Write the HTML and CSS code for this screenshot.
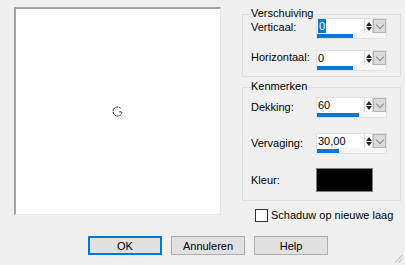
FILE: index.html
```html
<!DOCTYPE html>
<html lang="nl">

<head>
  <meta charset="UTF-8" />
  <title>Slagschaduw</title>
  <link rel="stylesheet" href="styles.css">
</head>

<body>
  <div class="dialog">
    <div class="main">
      <div class="preview">
        <svg class="cursor" width="11" height="11" viewBox="0 0 11 11">
          <path d="M8.7 2.3 A4.5 4.5 0 1 0 10 5.9 H7" fill="none" stroke="#222" stroke-width="1" stroke-dasharray="2 0.7" />
        </svg>
      </div>

      <div class="side">
        <div class="group group-offset">
          <div class="group-title">Verschuiving</div>
          <div class="row row-first">
            <span class="label pad-2">Verticaal:</span>
            <div class="field">
              <div class="field-top">
                <span class="value"><span class="selected">0</span></span>
                <span class="spin"><i class="up"></i><i class="down"></i></span>
                <span class="drop"></span>
              </div>
              <div class="track"><div class="fill" style="width: 36px"></div></div>
            </div>
          </div>
          <div class="row">
            <span class="label">Horizontaal:</span>
            <div class="field">
              <div class="field-top">
                <span class="value">0</span>
                <span class="spin"><i class="up"></i><i class="down"></i></span>
                <span class="drop"></span>
              </div>
              <div class="track"><div class="fill" style="width: 36px"></div></div>
            </div>
          </div>
        </div>

        <div class="group group-props">
          <div class="group-title">Kenmerken</div>
          <div class="row row-first">
            <span class="label pad-3">Dekking:</span>
            <div class="field">
              <div class="field-top">
                <span class="value">60</span>
                <span class="spin"><i class="up"></i><i class="down"></i></span>
                <span class="drop"></span>
              </div>
              <div class="track"><div class="fill" style="width: 42px"></div></div>
            </div>
          </div>
          <div class="row">
            <span class="label pad-3">Vervaging:</span>
            <div class="field">
              <div class="field-top">
                <span class="value">30,00</span>
                <span class="spin"><i class="up"></i><i class="down"></i></span>
                <span class="drop"></span>
              </div>
              <div class="track"><div class="fill" style="width: 22px"></div></div>
            </div>
          </div>
          <div class="row row-color">
            <span class="label">Kleur:</span>
            <div class="swatch"></div>
          </div>
        </div>

        <label class="check">
          <span class="box"></span>
          Schaduw op nieuwe laag
        </label>
      </div>
    </div>

    <div class="buttons">
      <button class="btn btn-default">OK</button>
      <button class="btn">Annuleren</button>
      <button class="btn">Help</button>
    </div>

    <svg class="grip" width="9" height="9" viewBox="0 0 9 9">
      <path d="M8.5 1 L1 8.5 M8.5 4.5 L4.5 8.5" stroke="#b0b0b0" stroke-width="1" />
    </svg>
  </div>
</body>

</html>
```

FILE: styles.css
```css
* {
  margin: 0;
  padding: 0;
  box-sizing: border-box;
}

html,
body {
  width: 405px;
  height: 265px;
  overflow: hidden;
  background: #f0f0f0;
  font-family: 'Liberation Sans', Arial, sans-serif;
  font-size: 11px;
  color: #000;
}

.dialog {
  position: relative;
  height: 265px;
  padding: 7px 0 0 14px;
}

.main {
  display: flex;
  align-items: flex-start;
}

.preview {
  width: 207px;
  height: 208px;
  background: #fff;
  border-top: 2px solid #a3a3a3;
  border-left: 2px solid #a3a3a3;
  border-right: 1px solid #e6e6e6;
  border-bottom: 1px solid #e6e6e6;
  display: flex;
  align-items: center;
  justify-content: center;
}

.cursor {
  margin: 0 2px 1px 0;
}

.side {
  margin-left: 21px;
  width: 159px;
}

.group {
  border: 1px solid #dcdcdc;
  padding: 0 0 0 8px;
}

.group-offset {
  margin-top: 7px;
  height: 63px;
}

.group-props {
  margin-top: 10px;
  height: 114px;
}

.group-title {
  display: table;
  margin-top: -8px;
  padding: 0 2px 0 0;
  line-height: 13px;
  background: #f0f0f0;
}

.row {
  display: flex;
  align-items: flex-start;
  margin-top: 11px;
}

.group-offset .row-first {
  margin-top: -2px;
}

.group-props .row {
  margin-top: 15px;
}

.group-props .row-first {
  margin-top: 4px;
}

.group-props .row-color {
  margin-top: 14px;
  align-items: center;
}

.label {
  width: 65px;
  line-height: 14px;
}

.pad-2 {
  padding-top: 2px;
}

.pad-3 {
  padding-top: 3px;
}

.field {
  width: 71px;
  height: 21px;
  border: 1px solid #e0e0e0;
  background: #f7f7f7;
}

.field-top {
  display: flex;
  height: 14px;
}

.value {
  width: 46px;
  background: #fff;
  line-height: 14px;
  padding-left: 1px;
}

.selected {
  display: inline-block;
  background: #0078d7;
  color: #fff;
  padding: 0 1px;
}

.spin {
  width: 9px;
  margin-left: 1px;
  display: flex;
  flex-direction: column;
  justify-content: center;
  align-items: center;
  gap: 1px;
  background: #fff;
  border-left: 1px solid #d8d8d8;
  border-right: 1px solid #d8d8d8;
}

.spin i {
  width: 0;
  height: 0;
  border-left: 3px solid transparent;
  border-right: 3px solid transparent;
}

.spin .up {
  border-bottom: 4px solid #222;
}

.spin .down {
  border-top: 4px solid #222;
}

.drop {
  width: 13px;
  background: #dadada;
  border: 1px solid #b4b4b4;
}

.drop::after {
  content: "";
  display: block;
  width: 5px;
  height: 5px;
  margin: 2px auto 0;
  border-right: 1px solid #8a8a8a;
  border-bottom: 1px solid #8a8a8a;
  transform: rotate(45deg);
}

.track {
  height: 4px;
  margin-top: 1px;
}

.fill {
  height: 4px;
  background: #0078d7;
}

.swatch {
  width: 57px;
  height: 24px;
  background: #000;
  border: 1px solid #7a7a7a;
}

.check {
  display: flex;
  align-items: center;
  gap: 3px;
  margin: 8px 0 0 13px;
  line-height: 13px;
}

.box {
  width: 13px;
  height: 13px;
  border: 1px solid #333;
  background: #fff;
}

.buttons {
  display: flex;
  gap: 9px;
  margin-top: 14px;
  padding-left: 74px;
}

.btn {
  width: 74px;
  height: 19px;
  font-family: 'Liberation Sans', Arial, sans-serif;
  font-size: 11px;
  color: #000;
  background: #e1e1e1;
  border: 1px solid #adadad;
}

.btn-default {
  border: 2px solid #0078d7;
}

.grip {
  position: absolute;
  right: 2px;
  bottom: 2px;
}
```
